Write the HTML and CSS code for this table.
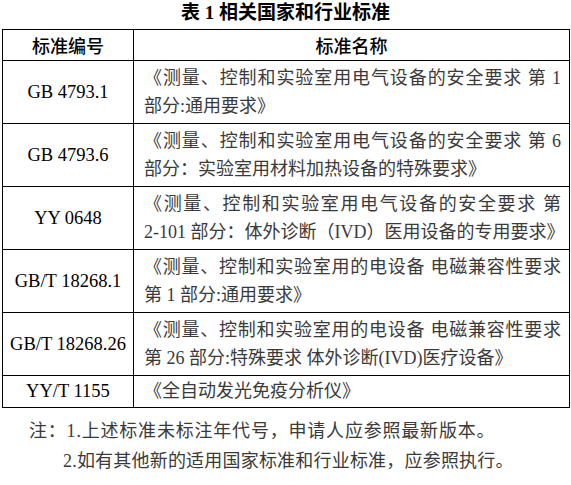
FILE: index.html
```html
<!DOCTYPE html>
<html lang="zh-CN">
<head>
<meta charset="utf-8">
<title>相关国家和行业标准</title>
<link rel="stylesheet" href="styles.css">
</head>
<body>
<div class="page">
  <div class="title">表 1 相关国家和行业标准</div>
  <table class="std">
    <colgroup><col class="c1"><col class="c2"></colgroup>
    <thead>
      <tr class="one"><th>标准编号</th><th>标准名称</th></tr>
    </thead>
    <tbody>
      <tr class="two"><td class="code">GB 4793.1</td><td class="name">《测量、控制和实验室用电气设备的安全要求 第 1 部分:通用要求》</td></tr>
      <tr class="two"><td class="code">GB 4793.6</td><td class="name">《测量、控制和实验室用电气设备的安全要求 第 6 部分：实验室用材料加热设备的特殊要求》</td></tr>
      <tr class="two"><td class="code">YY 0648</td><td class="name">《测量、控制和实验室用电气设备的安全要求 第 <span class="nw">2-101</span> 部分：体外诊断（IVD）医用设备的专用要求》</td></tr>
      <tr class="two"><td class="code">GB/T 18268.1</td><td class="name">《测量、控制和实验室用的电设备 电磁兼容性要求 第 1 部分:通用要求》</td></tr>
      <tr class="two"><td class="code">GB/T 18268.26</td><td class="name">《测量、控制和实验室用的电设备 电磁兼容性要求 第 26 部分:特殊要求 体外诊断(IVD)医疗设备》</td></tr>
      <tr class="one"><td class="code">YY/T 1155</td><td class="name">《全自动发光免疫分析仪》</td></tr>
    </tbody>
  </table>
  <div class="notes">
    <p class="n1">注：1.上述标准未标注年代号，申请人应参照最新版本。</p>
    <p class="n2">2.如有其他新的适用国家标准和行业标准，应参照执行。</p>
  </div>
</div>
</body>
</html>
```

FILE: styles.css
```css
html, body {
  margin: 0;
  padding: 0;
  background: #fff;
}
.page {
  width: 571px;
  padding: 0 0 0 2px;
  box-sizing: border-box;
  font-family: "Liberation Serif", "Noto Sans CJK SC", serif;
  color: #000;
}
.title {
  font-family: "Liberation Serif", "Noto Sans CJK SC", sans-serif;
  font-weight: bold;
  font-size: 19px;
  line-height: 26px;
  height: 29px;
  text-align: center;
  padding-right: 2px;
}
.std {
  border-collapse: collapse;
  table-layout: fixed;
  width: 567px;
}
.c1 { width: 131px; }
.c2 { width: 436px; }
.std th, .std td {
  border: 1px solid #000;
  line-height: 28px;
  vertical-align: middle;
}
.std th {
  font-family: "Noto Sans CJK SC", sans-serif;
  font-weight: 500;
  font-size: 18px;
  padding: 1px 0 1px;
  text-align: center;
}
.std tr.one td { padding-top: 1px; padding-bottom: 2px; }
.std tr.two td { padding-top: 3px; padding-bottom: 3px; }
.code {
  font-size: 18.5px;
  text-align: center;
  padding-left: 0;
  padding-right: 0;
}
.name {
  font-size: 18px;
  color: #3a3a3a;
  text-align: justify;
  padding-left: 10px;
  padding-right: 8px;
}
.nw { white-space: nowrap; }
.notes {
  margin-top: 8px;
  font-size: 18px;
  color: #3a3a3a;
}
.notes p {
  margin: 0;
  line-height: 30px;
}
.n1 { padding-left: 27px; letter-spacing: 0.8px; }
.n2 { padding-left: 61px; letter-spacing: 0.2px; }
```
